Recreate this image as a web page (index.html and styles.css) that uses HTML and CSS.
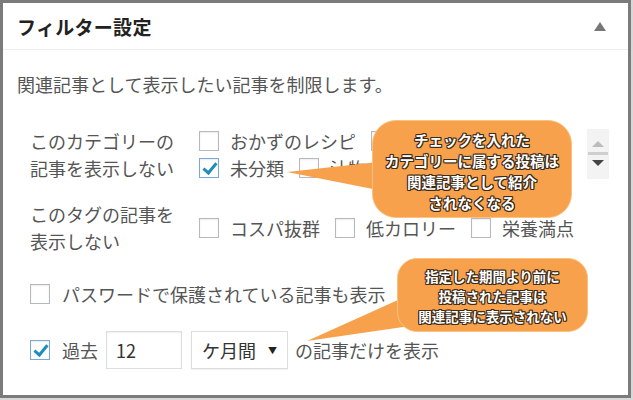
FILE: index.html
```html
<!DOCTYPE html>
<html lang="ja">
<head>
<meta charset="utf-8">
<link rel="stylesheet" href="styles.css">
</head>
<body>
<div class="frame">
  <div class="head">
    <h2 class="title">フィルター設定</h2>
    <span class="toggle"></span>
  </div>
  <div class="content">
    <p class="desc">関連記事として表示したい記事を制限します。</p>

    <div class="row">
      <div class="label">このカテゴリーの<br>記事を表示しない</div>
      <div class="listbox">
        <div class="items">
          <div class="line">
            <span class="opt"><span class="cb"></span>おかずのレシピ</span>
            <span class="opt"><span class="cb"></span></span>
          </div>
          <div class="line">
            <span class="opt"><span class="cb checked"></span>未分類</span>
            <span class="opt"><span class="cb"></span>汁物</span>
          </div>
        </div>
        <div class="scroll">
          <span class="arr up"></span>
          <span class="bar"></span>
          <span class="arr down"></span>
        </div>
      </div>
    </div>

    <div class="row tags">
      <div class="label">このタグの記事を<br>表示しない</div>
      <div class="line">
        <span class="opt"><span class="cb"></span>コスパ抜群</span>
        <span class="opt"><span class="cb"></span>低カロリー</span>
        <span class="opt"><span class="cb"></span>栄養満点</span>
      </div>
    </div>

    <div class="single pw">
      <span class="cb"></span>パスワードで保護されている記事も表示
    </div>

    <div class="single past">
      <span class="cb checked"></span>過去
      <span class="num">12</span>
      <span class="sel">ケ月間<span class="caret">▼</span></span>
      の記事だけを表示
    </div>
  </div>

  <svg class="tails" width="633" height="400" viewBox="0 0 633 400">
    <polygon points="287,172 378,162 378,190" fill="#f8a14c"/>
    <polygon points="307,341 398,300 410,326" fill="#f8a14c"/>
  </svg>

  <div class="callout c1">チェックを入れた<br>カテゴリーに属する投稿は<br>関連記事として紹介<br>されなくなる</div>
  <div class="callout c2">指定した期間より前に<br>投稿された記事は<br>関連記事に表示されない</div>
</div>
</body>
</html>
```

FILE: styles.css
```css
* { box-sizing: border-box; }
html, body { margin: 0; padding: 0; background: #d8d8d8; }
body { width: 633px; height: 400px; overflow: hidden; }

.frame {
  position: relative;
  width: 631px;
  height: 398px;
  border: 3px solid #7b7b7b;
  background: #fff;
  font-family: "Noto Sans CJK JP", "Noto Sans", sans-serif;
  color: #555;
}

.head {
  height: 47px;
  border-bottom: 1px solid #eeeeee;
  display: flex;
  align-items: center;
  justify-content: space-between;
  padding: 0 20px 0 14px;
}
.title {
  margin: 0;
  font-size: 19px;
  font-weight: 700;
  color: #222;
  letter-spacing: 0.3px;
}
.toggle {
  width: 0; height: 0;
  border-left: 6px solid transparent;
  border-right: 6px solid transparent;
  border-bottom: 9px solid #777;
  margin-right: 2px;
}

.content { padding: 0 0 0 14px; font-size: 18px; }
.desc { margin: 21px 0 0; line-height: 26px; }

.row {
  display: flex;
  align-items: flex-start;
  margin-top: 30px;
}
.label {
  width: 182px;
  padding-left: 13px;
  line-height: 27px;
  padding-top: 1px;
  white-space: nowrap;
}

.listbox {
  display: flex;
  width: 410px;
  height: 54px;
}
.items { flex: 1; overflow: hidden; }
.line {
  display: flex;
  align-items: center;
  height: 27px;
  white-space: nowrap;
}
.opt { display: inline-flex; align-items: center; margin-right: 15px; }
.opt .cb { margin-right: 11px; }

.cb {
  display: inline-block;
  position: relative;
  width: 20px;
  height: 20px;
  border: 1px solid #b4b9be;
  background: #fff;
  box-shadow: inset 0 1px 2px rgba(0,0,0,0.08);
  flex: none;
}
.cb.checked { border-color: #7aa8d6; }
.cb.checked::after {
  content: "";
  position: absolute;
  left: 6px; top: 1px;
  width: 5px; height: 11px;
  border-right: 3px solid #1e8cbe;
  border-bottom: 3px solid #1e8cbe;
  transform: rotate(40deg);
}

.scroll {
  width: 22px;
  height: 50px;
  margin-top: 2px;
  background: #f3f3f3;
  display: flex;
  flex-direction: column;
  align-items: center;
  padding-top: 12px;
}
.arr { width: 0; height: 0; border-left: 6px solid transparent; border-right: 6px solid transparent; }
.arr.up { border-bottom: 6px solid #bcbcbc; }
.arr.down { border-top: 6px solid #444; }
.bar { width: 20px; height: 3px; background: #cfcfcf; margin: 5px 0; }

.tags { margin-top: 18px; }
.tags .line { margin-top: 14px; }

.single {
  display: flex;
  align-items: center;
  padding-left: 13px;
  white-space: nowrap;
}
.single .cb { margin-right: 12px; }
.pw { margin-top: 25px; height: 28px; }
.past { margin-top: 23px; height: 38px; }

.num {
  display: inline-flex;
  align-items: center;
  width: 76px;
  height: 38px;
  margin-left: 8px;
  padding-left: 9px;
  border: 1px solid #ddd;
  box-shadow: inset 0 1px 2px rgba(0,0,0,0.07);
  color: #333;
}
.sel {
  display: inline-flex;
  align-items: center;
  justify-content: space-between;
  width: 97px;
  height: 38px;
  margin-left: 9px;
  margin-right: 7px;
  padding: 0 10px 0 10px;
  border: 1px solid #ddd;
  box-shadow: 0 1px 1px rgba(0,0,0,0.05);
  color: #333;
}
.caret { font-size: 9px; color: #222; }

.tails { position: absolute; left: -3px; top: -3px; pointer-events: none; }

.callout {
  position: absolute;
  background: #f8a14c;
  border: 1px solid #fbc27f;
  color: #fff;
  font-weight: 700;
  text-align: center;
  text-shadow:
    -1px -1px 0 #3a2a1a, 1px -1px 0 #3a2a1a, -1px 1px 0 #3a2a1a, 1px 1px 0 #3a2a1a,
    0 1px 0 #3a2a1a, 0 -1px 0 #3a2a1a, 1px 0 0 #3a2a1a, -1px 0 0 #3a2a1a;
}
.c1 {
  left: 369px; top: 117px;
  width: 200px; height: 98px;
  border-radius: 24px;
  font-size: 14.5px;
  line-height: 21px;
  padding-top: 8px;
}
.c2 {
  left: 394px; top: 255px;
  width: 191px; height: 74px;
  border-radius: 20px;
  font-size: 13.5px;
  line-height: 20px;
  padding-top: 7px;
}
```
